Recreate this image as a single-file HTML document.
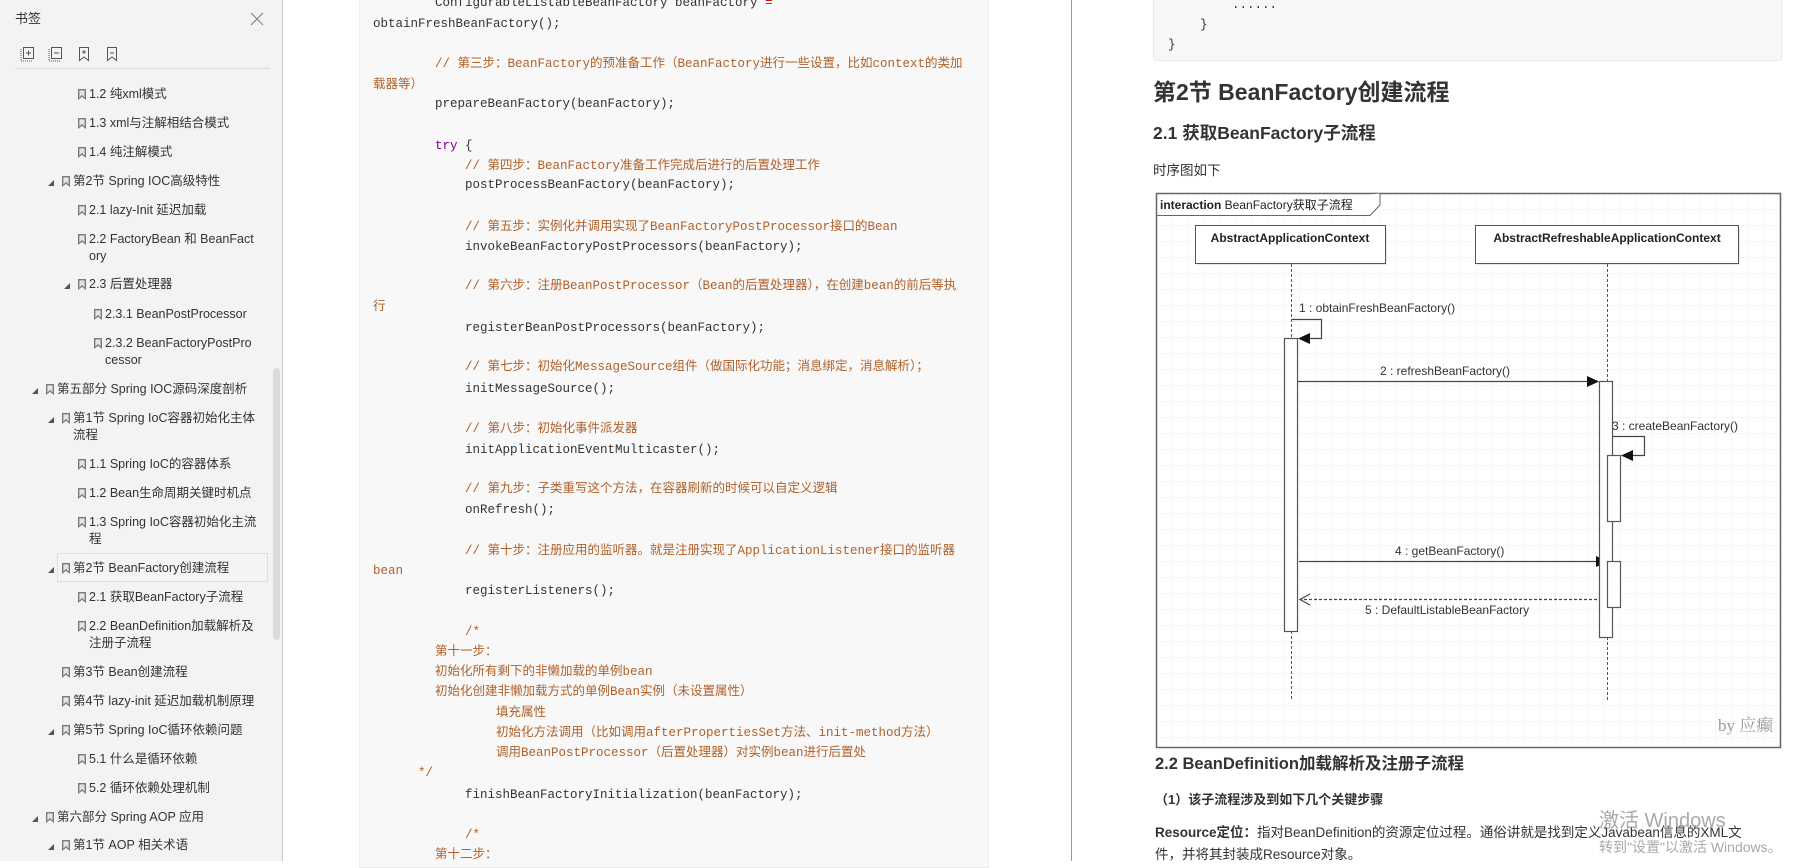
<!DOCTYPE html>
<html><head><meta charset="utf-8">
<style>
*{margin:0;padding:0;box-sizing:border-box}
body{width:1817px;height:861px;overflow:hidden;background:#fff;position:relative;font-family:"Liberation Sans","Noto Sans CJK SC",sans-serif;color:#333}
.sb{position:absolute;left:0;top:0;width:283px;height:861px;background:#f3f3f3;border-right:1px solid #c8c8c8}
.it{position:absolute;font-size:12.5px;line-height:18px;white-space:nowrap;color:#333}
.bm{position:absolute;width:8px;height:11px;background:#7a7a7a;clip-path:polygon(0 0,100% 0,100% 100%,50% 72%,0 100%)}
.bm:after{content:"";position:absolute;left:1.4px;top:1.4px;width:5.2px;height:7.2px;background:#e4e4e4;clip-path:polygon(0 0,100% 0,100% 100%,50% 62%,0 100%)}
.tri{position:absolute;width:0;height:0;border-left:6px solid transparent;border-bottom:6px solid #555}
.cl{position:absolute;font-family:"Liberation Mono","Noto Sans CJK SC",monospace;font-size:12.5px;line-height:20px;white-space:pre;color:#333}
.cm{color:#b0612a}
.kw{color:#770088}
.p2{position:absolute;font-family:"Liberation Sans","Noto Sans CJK SC",sans-serif;white-space:nowrap;color:#333}
</style></head><body>

<div class="sb">
 <div class="it" style="left:15px;top:10px;font-size:13px">书签</div>
 <svg style="position:absolute;left:250px;top:12px" width="14" height="14"><path d="M1 1L13 13M13 1L1 13" stroke="#888" stroke-width="1.2"/></svg>
 <svg style="position:absolute;left:20px;top:46px" width="110" height="16">
  <rect x="3.5" y="1.5" width="10" height="11" fill="none" stroke="#555"/><path d="M1 3V15H12" fill="none" stroke="#555" stroke-dasharray="1 1"/><path d="M6 7H11M8.5 4.5V9.5" stroke="#555"/>
  <rect x="31.5" y="1.5" width="10" height="11" fill="none" stroke="#555"/><path d="M29 3V15H40" fill="none" stroke="#555" stroke-dasharray="1 1"/><path d="M34 7H39" stroke="#555"/>
  <path d="M59.5 1.5H68.5V14.5L64 11L59.5 14.5Z" fill="none" stroke="#555"/><path d="M62 6H66M64 4V8" stroke="#555"/>
  <path d="M87.5 1.5H96.5V14.5L92 11L87.5 14.5Z" fill="none" stroke="#555"/><path d="M90 7H94" stroke="#555"/>
 </svg>
 <div style="position:absolute;left:15px;top:68px;width:255px;height:1px;background:#dcdcdc"></div>
 <div style="position:absolute;left:273px;top:368px;width:7px;height:272px;background:#dcdcdc;border-radius:4px"></div>
 <div style="position:absolute;left:57px;top:553px;width:211px;height:29px;border:1px solid #dedede;background:#f4f4f4"></div>

 <div class="bm" style="left:78px;top:89px"></div><div class="it" style="left:89px;top:85px">1.2 纯xml模式</div>
 <div class="bm" style="left:78px;top:118px"></div><div class="it" style="left:89px;top:114px">1.3 xml与注解相结合模式</div>
 <div class="bm" style="left:78px;top:147px"></div><div class="it" style="left:89px;top:143px">1.4 纯注解模式</div>
 <div class="tri" style="left:48px;top:180px"></div><div class="bm" style="left:62px;top:176px"></div><div class="it" style="left:73px;top:172px">第2节 Spring IOC高级特性</div>
 <div class="bm" style="left:78px;top:205px"></div><div class="it" style="left:89px;top:201px">2.1 lazy-Init 延迟加载</div>
 <div class="bm" style="left:78px;top:234px"></div><div class="it" style="left:89px;top:230px">2.2 FactoryBean 和 BeanFact</div><div class="it" style="left:89px;top:247px">ory</div>
 <div class="tri" style="left:64px;top:283px"></div><div class="bm" style="left:78px;top:279px"></div><div class="it" style="left:89px;top:275px">2.3 后置处理器</div>
 <div class="bm" style="left:94px;top:309px"></div><div class="it" style="left:105px;top:305px">2.3.1 BeanPostProcessor</div>
 <div class="bm" style="left:94px;top:338px"></div><div class="it" style="left:105px;top:334px">2.3.2 BeanFactoryPostPro</div><div class="it" style="left:105px;top:351px">cessor</div>
 <div class="tri" style="left:32px;top:388px"></div><div class="bm" style="left:46px;top:384px"></div><div class="it" style="left:57px;top:380px">第五部分 Spring IOC源码深度剖析</div>
 <div class="tri" style="left:48px;top:417px"></div><div class="bm" style="left:62px;top:413px"></div><div class="it" style="left:73px;top:409px">第1节 Spring IoC容器初始化主体</div><div class="it" style="left:73px;top:426px">流程</div>
 <div class="bm" style="left:78px;top:459px"></div><div class="it" style="left:89px;top:455px">1.1 Spring IoC的容器体系</div>
 <div class="bm" style="left:78px;top:488px"></div><div class="it" style="left:89px;top:484px">1.2 Bean生命周期关键时机点</div>
 <div class="bm" style="left:78px;top:517px"></div><div class="it" style="left:89px;top:513px">1.3 Spring IoC容器初始化主流</div><div class="it" style="left:89px;top:530px">程</div>
 <div class="tri" style="left:48px;top:567px"></div><div class="bm" style="left:62px;top:563px"></div><div class="it" style="left:73px;top:559px">第2节 BeanFactory创建流程</div>
 <div class="bm" style="left:78px;top:592px"></div><div class="it" style="left:89px;top:588px">2.1 获取BeanFactory子流程</div>
 <div class="bm" style="left:78px;top:621px"></div><div class="it" style="left:89px;top:617px">2.2 BeanDefinition加载解析及</div><div class="it" style="left:89px;top:634px">注册子流程</div>
 <div class="bm" style="left:62px;top:667px"></div><div class="it" style="left:73px;top:663px">第3节 Bean创建流程</div>
 <div class="bm" style="left:62px;top:696px"></div><div class="it" style="left:73px;top:692px">第4节 lazy-init 延迟加载机制原理</div>
 <div class="tri" style="left:48px;top:729px"></div><div class="bm" style="left:62px;top:725px"></div><div class="it" style="left:73px;top:721px">第5节 Spring IoC循环依赖问题</div>
 <div class="bm" style="left:78px;top:754px"></div><div class="it" style="left:89px;top:750px">5.1 什么是循环依赖</div>
 <div class="bm" style="left:78px;top:783px"></div><div class="it" style="left:89px;top:779px">5.2 循环依赖处理机制</div>
 <div class="tri" style="left:32px;top:816px"></div><div class="bm" style="left:46px;top:812px"></div><div class="it" style="left:57px;top:808px">第六部分 Spring AOP 应用</div>
 <div class="tri" style="left:48px;top:844px"></div><div class="bm" style="left:62px;top:840px"></div><div class="it" style="left:73px;top:836px">第1节 AOP 相关术语</div>
</div>

<div style="position:absolute;left:359px;top:-2px;width:630px;height:870px;background:#f8f8f8;border:1px solid #ececec"></div>
<div style="position:absolute;left:1071px;top:0;width:1px;height:861px;background:#999"></div>

<div class="cl" style="left:435px;top:-7px">ConfigurableListableBeanFactory beanFactory <span style="color:#d00">=</span></div>
<div class="cl" style="left:373px;top:14px">obtainFreshBeanFactory();</div>
<div class="cl cm" style="left:435px;top:54px">// 第三步：BeanFactory的预准备工作（BeanFactory进行一些设置，比如context的类加</div>
<div class="cl cm" style="left:373px;top:75px">载器等）</div>
<div class="cl" style="left:435px;top:94px">prepareBeanFactory(beanFactory);</div>
<div class="cl" style="left:435px;top:136px"><span class="kw">try</span> {</div>
<div class="cl cm" style="left:465px;top:156px">// 第四步：BeanFactory准备工作完成后进行的后置处理工作</div>
<div class="cl" style="left:465px;top:175px">postProcessBeanFactory(beanFactory);</div>
<div class="cl cm" style="left:465px;top:217px">// 第五步：实例化并调用实现了BeanFactoryPostProcessor接口的Bean</div>
<div class="cl" style="left:465px;top:237px">invokeBeanFactoryPostProcessors(beanFactory);</div>
<div class="cl cm" style="left:465px;top:276px">// 第六步：注册BeanPostProcessor（Bean的后置处理器），在创建bean的前后等执</div>
<div class="cl cm" style="left:373px;top:297px">行</div>
<div class="cl" style="left:465px;top:318px">registerBeanPostProcessors(beanFactory);</div>
<div class="cl cm" style="left:465px;top:357px">// 第七步：初始化MessageSource组件（做国际化功能；消息绑定，消息解析）；</div>
<div class="cl" style="left:465px;top:379px">initMessageSource();</div>
<div class="cl cm" style="left:465px;top:419px">// 第八步：初始化事件派发器</div>
<div class="cl" style="left:465px;top:440px">initApplicationEventMulticaster();</div>
<div class="cl cm" style="left:465px;top:479px">// 第九步：子类重写这个方法，在容器刷新的时候可以自定义逻辑</div>
<div class="cl" style="left:465px;top:500px">onRefresh();</div>
<div class="cl cm" style="left:465px;top:541px">// 第十步：注册应用的监听器。就是注册实现了ApplicationListener接口的监听器</div>
<div class="cl cm" style="left:373px;top:561px">bean</div>
<div class="cl" style="left:465px;top:581px">registerListeners();</div>
<div class="cl cm" style="left:465px;top:622px">/*</div>
<div class="cl cm" style="left:435px;top:642px">第十一步：</div>
<div class="cl cm" style="left:435px;top:662px">初始化所有剩下的非懒加载的单例bean</div>
<div class="cl cm" style="left:435px;top:682px">初始化创建非懒加载方式的单例Bean实例（未设置属性）</div>
<div class="cl cm" style="left:496px;top:703px">填充属性</div>
<div class="cl cm" style="left:496px;top:723px">初始化方法调用（比如调用afterPropertiesSet方法、init-method方法）</div>
<div class="cl cm" style="left:496px;top:743px">调用BeanPostProcessor（后置处理器）对实例bean进行后置处</div>
<div class="cl cm" style="left:418px;top:763px">*/</div>
<div class="cl" style="left:465px;top:785px">finishBeanFactoryInitialization(beanFactory);</div>
<div class="cl cm" style="left:465px;top:825px">/*</div>
<div class="cl cm" style="left:435px;top:845px">第十二步：</div>

<div style="position:absolute;left:1153px;top:-6px;width:629px;height:67px;background:#f7f7f7;border:1px solid #e8e8e8;border-radius:3px"></div>
<div class="cl" style="left:1232px;top:-5px">......</div>
<div class="cl" style="left:1200px;top:15px">}</div>
<div class="cl" style="left:1168px;top:35px">}</div>
<div class="p2" style="left:1153px;top:77px;font-size:23px;font-weight:bold;line-height:30px">第2节 BeanFactory创建流程</div>
<div class="p2" style="left:1153px;top:121px;font-size:17.5px;font-weight:bold;line-height:24px">2.1 获取BeanFactory子流程</div>
<div class="p2" style="left:1153px;top:161px;font-size:13.5px;line-height:20px">时序图如下</div>

<svg style="position:absolute;left:0;top:0" width="1817" height="861">
 <defs><pattern id="g" x="1156" y="194" width="16" height="16" patternUnits="userSpaceOnUse"><path d="M16 0V16H0" fill="none" stroke="#ececec" stroke-width="1"/></pattern></defs>
 <rect x="1156" y="194" width="624" height="554" fill="url(#g)"/>
 <rect x="1156.5" y="193.5" width="624" height="554" fill="none" stroke="#666" stroke-width="1.5"/>
 <path d="M1156.5 215.5H1370L1380 205V193.5" fill="#fff" stroke="#666"/>
 <text x="1160" y="209" font-family="Liberation Sans,Noto Sans CJK SC,sans-serif" font-size="12" fill="#222"><tspan font-weight="bold">interaction</tspan> BeanFactory获取子流程</text>
 <rect x="1197" y="227" width="190" height="38" fill="#e8e8e8"/>
 <rect x="1195.5" y="225.5" width="190" height="38" fill="#fff" stroke="#555"/>
 <text x="1290" y="242" text-anchor="middle" font-family="Liberation Sans,sans-serif" font-size="12" font-weight="bold" fill="#222">AbstractApplicationContext</text>
 <rect x="1477" y="227" width="263" height="38" fill="#e8e8e8"/>
 <rect x="1475.5" y="225.5" width="263" height="38" fill="#fff" stroke="#555"/>
 <text x="1607" y="242" text-anchor="middle" font-family="Liberation Sans,sans-serif" font-size="12" font-weight="bold" fill="#222">AbstractRefreshableApplicationContext</text>
 <g stroke="#555" stroke-dasharray="3 2" fill="none">
  <path d="M1291.5 264V338M1291.5 631V700"/>
  <path d="M1607.5 264V381M1607.5 637V700"/>
 </g>
 <g font-family="Liberation Sans,sans-serif" font-size="12" fill="#333">
  <text x="1299" y="312">1 : obtainFreshBeanFactory()</text>
  <text x="1380" y="375">2 : refreshBeanFactory()</text>
  <text x="1612" y="430">3 : createBeanFactory()</text>
  <text x="1395" y="555">4 : getBeanFactory()</text>
  <text x="1365" y="614">5 : DefaultListableBeanFactory</text>
 </g>
 <g stroke="#444" fill="none" stroke-width="1.2">
  <path d="M1292 319.5H1321.5V338.5H1300"/>
  <path d="M1298 381.5H1598"/>
  <path d="M1613 436.5H1644.5V455.5H1623"/>
  <path d="M1299 561.5H1606"/>
  <path d="M1607 599.5H1301" stroke-dasharray="3 2"/>
  <path d="M1310 594L1300 599.5L1310 605"/>
 </g>
 <g fill="#111">
  <path d="M1298 338.5L1310 333V344Z"/>
  <path d="M1599 381.5L1587 376V387Z"/>
  <path d="M1621 455.5L1633 450V461Z"/>
  <path d="M1608 561.5L1596 556V567Z"/>
 </g>
 <g fill="#fff" stroke="#555" stroke-width="1.2">
  <rect x="1284.5" y="338.5" width="13" height="293"/>
  <rect x="1599.5" y="381.5" width="13" height="256"/>
  <rect x="1607.5" y="455.5" width="13" height="66"/>
  <rect x="1607.5" y="561.5" width="13" height="46"/>
 </g>
 <text x="1718" y="731" font-family="Liberation Serif,Noto Serif CJK SC,serif" font-size="17" fill="#999">by 应癫</text>
</svg>

<div class="p2" style="left:1155px;top:752px;font-size:16.5px;font-weight:bold;line-height:24px">2.2 BeanDefinition加载解析及注册子流程</div>
<div class="p2" style="left:1155px;top:791px;font-size:13px;font-weight:bold;line-height:18px">（1）该子流程涉及到如下几个关键步骤</div>
<div class="p2" style="left:1155px;top:823px;font-size:13.5px;line-height:20px"><b>Resource定位：</b>指对BeanDefinition的资源定位过程。通俗讲就是找到定义Javabean信息的XML文</div>
<div class="p2" style="left:1155px;top:845px;font-size:13.5px;line-height:20px">件，并将其封装成Resource对象。</div>
<div class="p2" style="left:1599px;top:808px;font-size:20px;line-height:26px;color:rgba(140,140,140,0.75)">激活 Windows</div>
<div class="p2" style="left:1599px;top:838px;font-size:14px;line-height:18px;color:rgba(140,140,140,0.75)">转到"设置"以激活 Windows。</div>
</body></html>
